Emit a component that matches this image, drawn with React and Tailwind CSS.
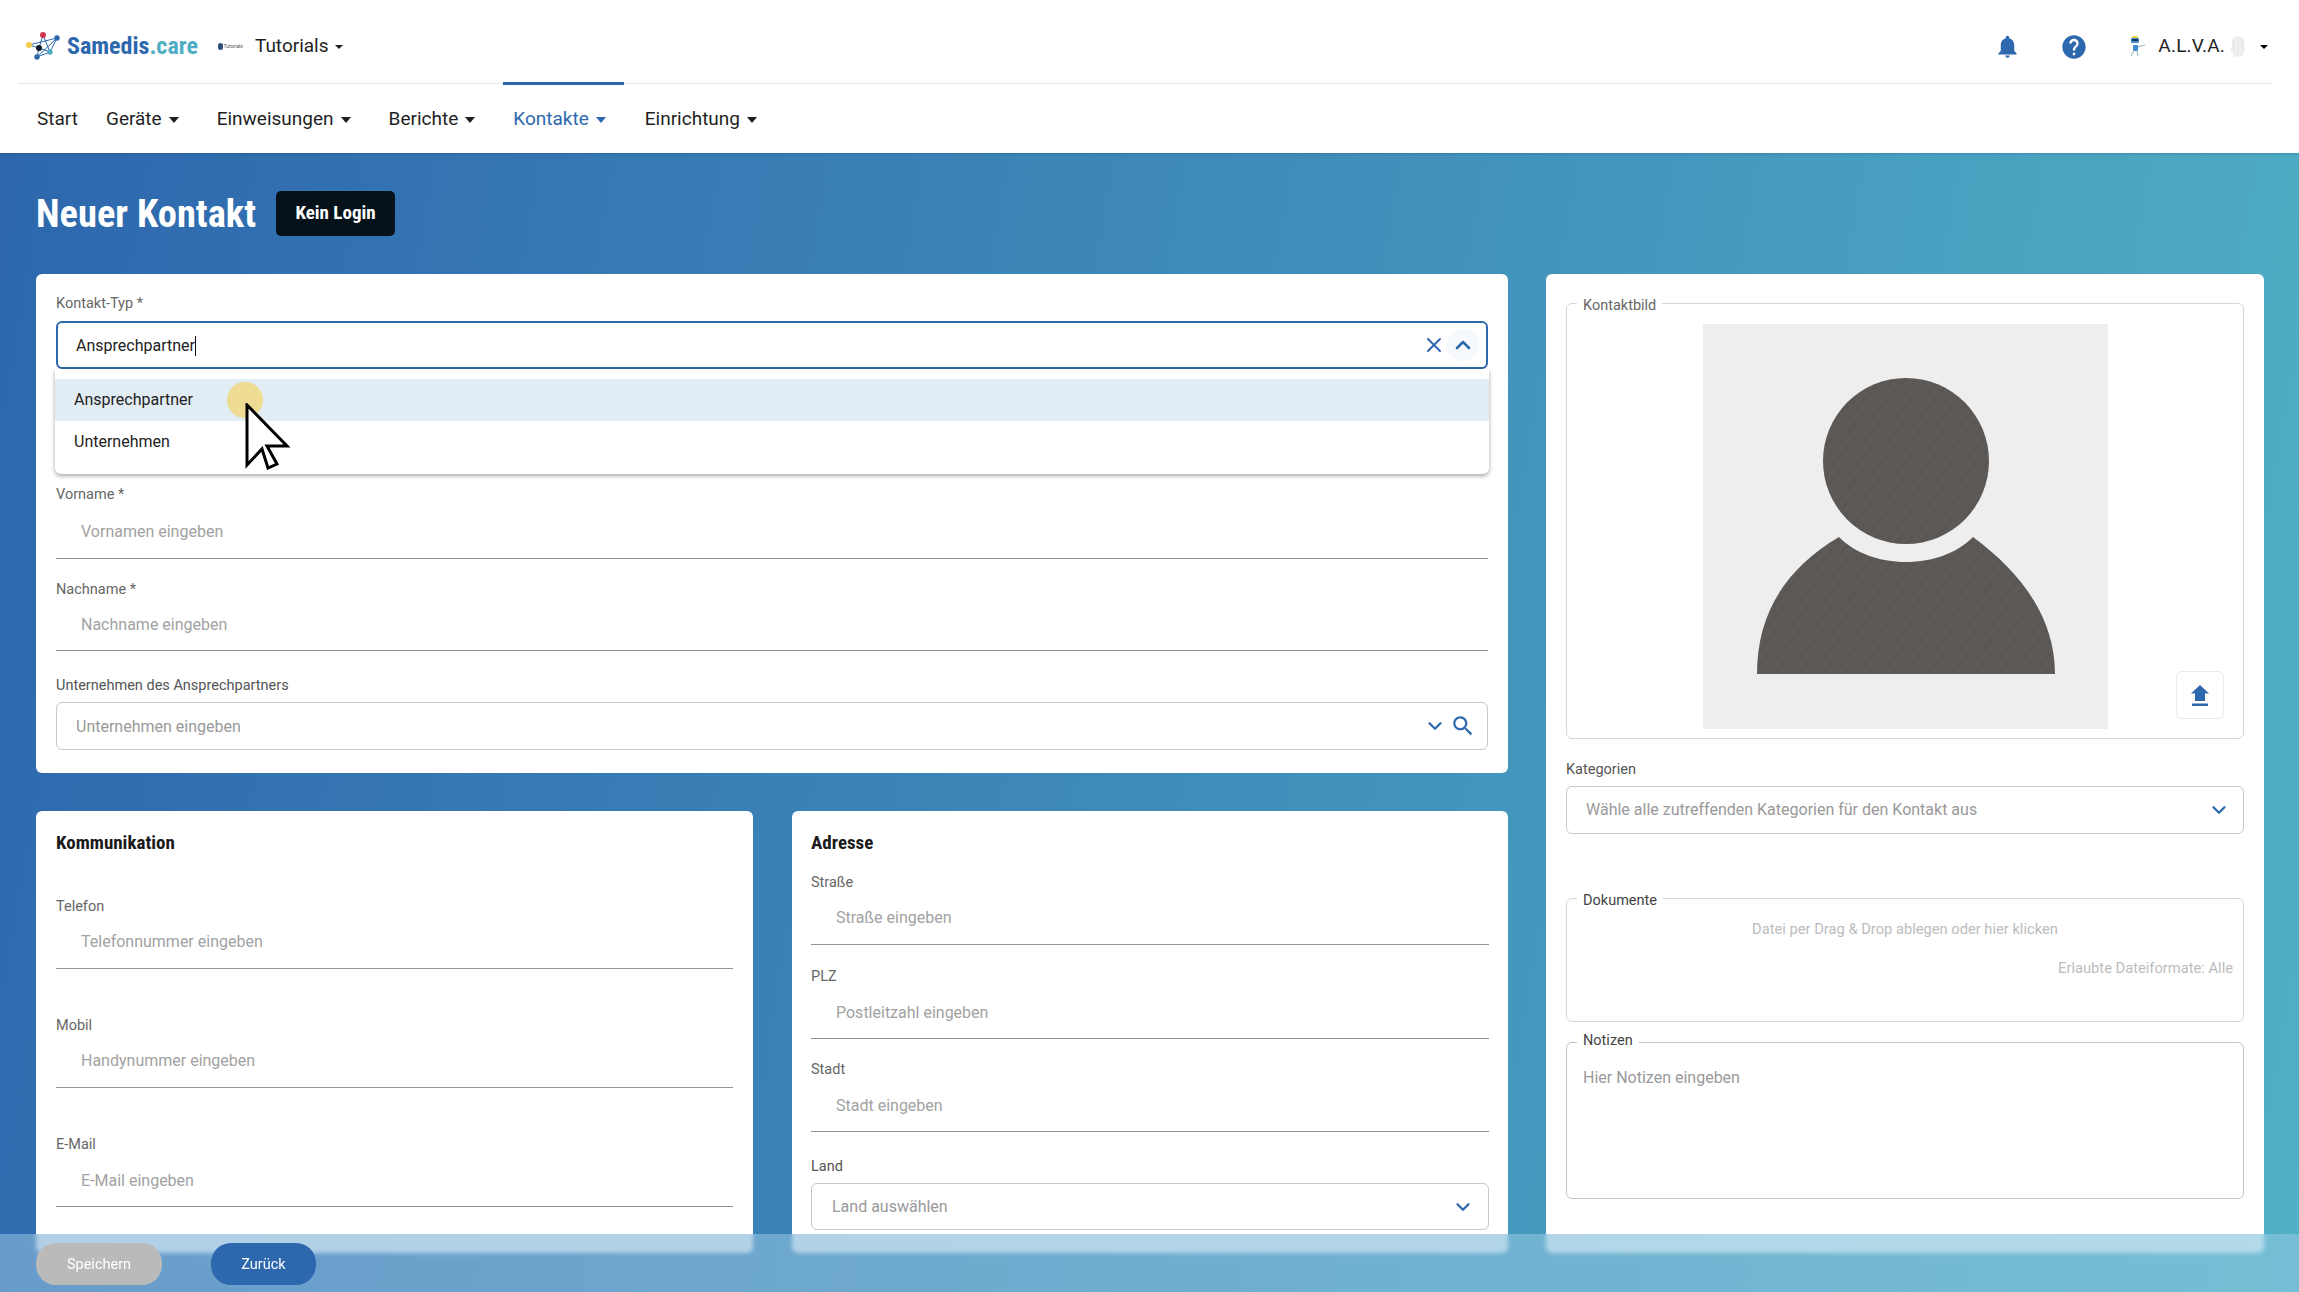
import React from "react";
import { X, ChevronUp, ChevronDown } from "lucide-react";

const font = { fontFamily: "Roboto, sans-serif" };

function Caret({ className = "" }) {
  return (
    <span
      className={`inline-block w-0 h-0 border-x-[5.5px] border-x-transparent border-t-[6px] border-t-current ml-[7px] ${className}`}
    />
  );
}

function NavItem({ label, active, className = "" }) {
  return (
    <div
      className={`flex items-center text-[19px] ${
        active ? "text-[#2d68ae]" : "text-[#1f1f1f]"
      } ${className}`}
    >
      {label}
      <Caret />
    </div>
  );
}

function Label({ children, color = "text-[#666666]", className = "" }) {
  return (
    <div className={`text-[14.5px] leading-[22px] -mb-[2px] ${color} ${className}`}>
      {children}
    </div>
  );
}

// Feld mit Unterstrich
function LineField({ label, placeholder, mt, h = "h-[53px]", pb = "pb-[16px]" }) {
  return (
    <div className={mt}>
      <Label>{label}</Label>
      <div
        className={`${h} ${pb} border-b border-[#949494] flex items-end pl-[25px] text-[16px] leading-5 text-[#a2a2a2]`}
      >
        {placeholder}
      </div>
    </div>
  );
}

function Legend({ children, dark, top = "-top-[8px]" }) {
  return (
    <span
      className={`absolute ${top} left-[10px] bg-white px-[6px] text-[14.5px] leading-5 ${
        dark ? "text-[#444444]" : "text-[#666666]"
      }`}
    >
      {children}
    </span>
  );
}

function Logo() {
  return (
    <svg width="34" height="30" viewBox="0 0 34 30" className="shrink-0">
      <g stroke="#2d68ae" strokeWidth="1" fill="none">
        <path d="M3 14 L31 7 L24 21 L11 26 L13 17 L17 4 L24 21" />
        <path d="M3 14 L13 17 L24 21 M31 7 L11 26" />
      </g>
      <circle cx="17" cy="4" r="3" fill="#d0364f" />
      <circle cx="31" cy="7" r="2.7" fill="#2d68ae" />
      <circle cx="3" cy="14" r="3" fill="#f2cf4a" />
      <circle cx="13" cy="17" r="3" fill="#0c1a2e" />
      <circle cx="24" cy="21" r="2.7" fill="#4fadc3" />
      <circle cx="11" cy="26" r="2.7" fill="#2d68ae" />
    </svg>
  );
}

function SearchIcon() {
  return (
    <svg width="26" height="26" viewBox="0 0 24 24" fill="#2d68ae" className="ml-[4px]">
      <path d="M15.5 14h-.79l-.28-.27C15.41 12.59 16 11.11 16 9.5 16 5.91 13.09 3 9.5 3S3 5.91 3 9.5 5.91 16 9.5 16c1.61 0 3.09-.59 4.23-1.57l.27.28v.79l5 4.99L20.49 19l-4.99-5zm-6 0C7.01 14 5 11.99 5 9.5S7.01 5 9.5 5 14 7.01 14 9.5 11.99 14 9.5 14z" />
    </svg>
  );
}

function Person() {
  return (
    <svg width="405" height="405" viewBox="0 0 405 405" className="block">
      <defs>
        <pattern id="hatch" width="9" height="9" patternUnits="userSpaceOnUse" patternTransform="rotate(-50)">
          <rect width="9" height="9" fill="#5c5957" />
          <rect width="9" height="2" fill="#585553" />
        </pattern>
      </defs>
      <rect width="405" height="405" fill="#eeeeee" />
      <circle cx="203" cy="137" r="83" fill="url(#hatch)" />
      <path
        d="M54 350 C54 290 82 245 136 213 C152 229 176 238 203 238 C230 238 254 229 270 213 C320 250 352 295 352 350 Z"
        fill="url(#hatch)"
      />
    </svg>
  );
}

export default function App() {
  return (
    <div
      className="relative w-[2299px] h-[1292px] overflow-hidden bg-[linear-gradient(100deg,#2d66ad,#50b0c5)]"
      style={font}
    >
      {/* Kopfzeile */}
      <header className="bg-white h-[153px] shadow-sm">
        <div className="h-[84px] ml-[18px] mr-[26px] border-b border-[#e6e6e6] flex items-center pl-[8px] pr-[5px] pt-[10px]">
          <span className="flex items-center mb-[2px]">
            <Logo />
            <span className="ml-[7px] text-[24px] font-bold text-[#2d68ae] [font-stretch:85%]">
              Samedis<span className="text-[#4fadc3]">.care</span>
            </span>
          </span>
          <span className="ml-[20px] w-[25px] flex items-center gap-[1px]">
            <span className="w-[7px] h-[7px] rounded-full bg-[#2d4f7e]" />
            <span className="text-[5px] leading-none text-[#555555]">Tutorials</span>
          </span>
          <span className="ml-[12px] text-[19px] text-[#1f1f1f] flex items-center">
            Tutorials
            <Caret className="!border-x-[4px] !border-t-[4px] !ml-[6px]" />
          </span>
          <div className="ml-auto flex items-center">
            <svg width="27" height="27" viewBox="0 0 24 24" fill="#2d68ae">
              <path d="M12 22c1.1 0 2-.9 2-2h-4c0 1.1.89 2 2 2zm6-6v-5c0-3.07-1.64-5.64-4.5-6.32V4c0-.83-.67-1.5-1.5-1.5s-1.5.67-1.5 1.5v.68C7.63 5.36 6 7.92 6 11v5l-2 2v1h16v-1l-2-2z" />
            </svg>
            <svg width="28" height="28" viewBox="0 0 24 24" fill="#2d68ae" className="ml-[39px]">
              <path d="M12 2C6.48 2 2 6.48 2 12s4.48 10 10 10 10-4.48 10-10S17.52 2 12 2zm1 17h-2v-2h2v2zm2.07-7.75l-.9.92C13.45 12.9 13 13.5 13 15h-2v-.5c0-1.1.45-2.1 1.17-2.83l1.24-1.26c.37-.36.59-.86.59-1.41 0-1.1-.9-2-2-2s-2 .9-2 2H8c0-2.21 1.79-4 4-4s4 1.79 4 4c0 .88-.36 1.68-.93 2.25z" />
            </svg>
            {/* Roboter */}
            <svg width="18" height="22" viewBox="0 0 18 22" className="ml-[40px]">
              <rect x="4" y="0" width="6" height="2" fill="#f2cf4a" />
              <rect x="3" y="2" width="8" height="5" rx="1" fill="#3f8fd0" />
              <rect x="4" y="3" width="6" height="2" fill="#123a55" />
              <rect x="5" y="9" width="5" height="6" rx="1" fill="#3f8fd0" />
              <path d="M10 11 L17 9 M6 15 L3 20 M9 15 L10 20" stroke="#8fb7c4" strokeWidth="1" fill="none" />
            </svg>
            <span className="ml-[12px] text-[19px] tracking-[0.2px] text-[#1f1f1f]">A.L.V.A.</span>
            {/* Kittel */}
            <svg width="14" height="22" viewBox="0 0 14 22" className="ml-[6px]">
              <path d="M5 1 H9 L12 3 L13.5 16 H11 V20 H3 V16 H0.5 L2 3 Z" fill="#f1f1f1" stroke="#e4e4e4" strokeWidth="0.8" />
              <path d="M7 2 V20 M3 4 V15 M11 4 V15" stroke="#dedede" strokeWidth="0.8" fill="none" />
            </svg>
            <Caret className="!border-x-[4px] !border-t-[4px] !ml-[15px]" />
          </div>
        </div>
        <nav className="relative h-[69px] flex items-center pl-[37px] pt-[2px]">
          <span className="text-[19px] text-[#1f1f1f]">Start</span>
          <NavItem label="Geräte" className="ml-[28px]" />
          <NavItem label="Einweisungen" className="ml-[38px]" />
          <NavItem label="Berichte" className="ml-[38px]" />
          <div className="relative ml-[38px]">
            <NavItem label="Kontakte" active />
            <div className="absolute -top-[23px] -left-[10px] -right-[18px] h-[3px] bg-[#2d68ae]" />
          </div>
          <NavItem label="Einrichtung" className="ml-[39px]" />
        </nav>
      </header>

      {/* Titel */}
      <div className="h-[121px] flex items-start pl-[36px] pt-[38px]">
        <h1 className="text-[38.5px] leading-[46px] font-bold text-white [font-stretch:75%]">
          Neuer Kontakt
        </h1>
        <span className="ml-[20px] h-[45px] w-[119px] rounded-[5px] bg-[#06121a] text-white font-bold text-[19px] [font-stretch:75%] flex items-center justify-center">
          Kein Login
        </span>
      </div>

      <div className="flex gap-[38px] pl-[36px] pr-[35px]">
        {/* Linke Spalte */}
        <div className="w-[1472px] flex flex-col gap-[38px]">
          <section className="relative bg-white rounded-[6px] h-[499px] px-[20px] pt-[19px]">
            <Label>Kontakt-Typ *</Label>
            <div className="mt-[8px] h-[48px] rounded-[6px] border-2 border-[#2d68ae] flex items-center pl-[18px] pr-[7px] text-[16px] text-[#222222]">
              <span className="flex items-center mt-[2px]">
                Ansprechpartner
                <span className="w-px h-[20px] bg-[#111111]" />
              </span>
              <X className="ml-auto text-[#2d68ae]" size={24} />
              <span className="ml-[1px] w-[32px] h-[32px] rounded-full bg-[#f5f8fc] flex items-center justify-center">
                <ChevronUp className="text-[#2d68ae]" size={24} strokeWidth={2.5} />
              </span>
            </div>

            <LineField label="Vorname *" placeholder="Vornamen eingeben" mt="mt-[115px]" h="h-[55px]" />
            <LineField label="Nachname *" placeholder="Nachname eingeben" mt="mt-[20px]" h="h-[52px]" pb="pb-[15px]" />

            <Label color="text-[#555555]" className="mt-[24px]">
              Unternehmen des Ansprechpartners
            </Label>
            <div className="mt-[7px] h-[48px] rounded-[6px] border border-[#c8c8c8] flex items-center pl-[19px] pr-[11px] text-[16px] text-[#999999]">
              <span className="mt-[1px]">Unternehmen eingeben</span>
              <ChevronDown className="ml-auto text-[#2d68ae]" size={22} strokeWidth={2.5} />
              <SearchIcon />
            </div>

            {/* Dropdown */}
            <div className="absolute left-[19px] right-[19px] top-[95px] h-[105px] bg-white rounded-b-[6px] shadow-[0_2px_4px_rgba(0,0,0,0.35)] pt-[10px]">
              <div className="h-[42px] bg-[#e2ecf5] flex items-center pl-[19px] text-[16px] text-[#222222]">
                Ansprechpartner
              </div>
              <div className="h-[42px] flex items-center pl-[19px] text-[16px] text-[#222222]">
                Unternehmen
              </div>
            </div>
          </section>

          <div className="flex gap-[39px]">
            <section className="w-[717px] h-[442px] bg-white rounded-[6px] px-[20px] pt-[21px]">
              <h2 className="text-[19px] leading-[22px] font-bold text-[#1a1a1a] [font-stretch:75%]">Kommunikation</h2>
              <LineField label="Telefon" placeholder="Telefonnummer eingeben" mt="mt-[42px]" />
              <LineField label="Mobil" placeholder="Handynummer eingeben" mt="mt-[46px]" />
              <LineField label="E-Mail" placeholder="E-Mail eingeben" mt="mt-[46px]" pb="pb-[15px]" />
            </section>
            <section className="flex-1 h-[442px] bg-white rounded-[6px] px-[19px] pt-[21px]">
              <h2 className="text-[19px] leading-[22px] font-bold text-[#1a1a1a] [font-stretch:75%]">Adresse</h2>
              <LineField label="Straße" placeholder="Straße eingeben" mt="mt-[18px]" />
              <LineField label="PLZ" placeholder="Postleitzahl eingeben" mt="mt-[21px]" pb="pb-[15px]" />
              <LineField label="Stadt" placeholder="Stadt eingeben" mt="mt-[20px]" pb="pb-[15px]" />
              <Label color="text-[#555555]" className="mt-[24px]">Land</Label>
              <div className="mt-[7px] h-[47px] rounded-[6px] border border-[#c8c8c8] flex items-center pl-[20px] pr-[14px] text-[16px] text-[#999999]">
                Land auswählen
                <ChevronDown className="ml-auto text-[#2d68ae]" size={22} strokeWidth={2.5} />
              </div>
            </section>
          </div>
        </div>

        {/* Rechte Spalte */}
        <aside className="flex-1 h-[979px] bg-white rounded-[6px] px-[20px] pt-[29px]">
          <div className="relative h-[436px] rounded-[6px] border border-[#d6d6d6] flex justify-center pt-[20px]">
            <Legend>Kontaktbild</Legend>
            <Person />
            <div className="absolute right-[19px] bottom-[19px] w-[48px] h-[48px] rounded-[6px] border border-[#e6ebf2] flex items-center justify-center">
              <svg width="24" height="24" viewBox="0 0 24 24" fill="#2d68ae">
                <path d="M4 23h16v-2.4H4V23zM7 18h10v-7.6h4L12 2 3 10.4h4V18z" />
              </svg>
            </div>
          </div>

          <Label color="text-[#555555]" className="mt-[20px]">Kategorien</Label>
          <div className="mt-[7px] h-[48px] rounded-[6px] border border-[#c8c8c8] flex items-center pl-[19px] pr-[13px] text-[16px] text-[#999999]">
            Wähle alle zutreffenden Kategorien für den Kontakt aus
            <ChevronDown className="ml-auto text-[#2d68ae]" size={22} strokeWidth={2.5} />
          </div>

          <div className="relative mt-[64px] h-[124px] rounded-[6px] border border-[#d6d6d6]">
            <Legend dark>Dokumente</Legend>
            <div className="pt-[20px] text-center text-[14.7px] leading-5 text-[#bcbcbc]">
              Datei per Drag &amp; Drop ablegen oder hier klicken
            </div>
            <div className="mt-[19px] pr-[10px] text-right text-[14.7px] leading-5 text-[#bcbcbc]">
              Erlaubte Dateiformate: Alle
            </div>
          </div>

          <div className="relative mt-[20px] h-[157px] rounded-[6px] border border-[#c4c4c4] pl-[16px] pt-[25px] text-[16px] leading-5 text-[#999999]">
            <Legend dark top="-top-[12px]">Notizen</Legend>
            Hier Notizen eingeben
          </div>
        </aside>
      </div>

      {/* Mauszeiger */}
      <div className="absolute left-[227px] top-[382px] w-[36px] h-[36px] rounded-full bg-[#eddc92]" />
      <svg width="46" height="68" viewBox="0 0 46 68" className="absolute left-[245px] top-[403px]">
        <path d="M2 2 L2 62 L17 46 L23 65 L32 61 L22 43 L42 43 Z" fill="#ffffff" stroke="#000000" strokeWidth="3" strokeLinejoin="miter" />
      </svg>

      {/* Fußleiste */}
      <div className="absolute left-0 right-0 bottom-0 h-[58px] backdrop-blur-[2px] bg-[linear-gradient(90deg,rgba(136,181,217,0.65),rgba(137,198,221,0.65))] flex items-start pl-[36px] pt-[9px]">
        <span className="w-[126px] h-[42px] pt-[2px] rounded-[20px] bg-[#bababa] text-white text-[14.5px] flex items-center justify-center">
          Speichern
        </span>
        <span className="ml-[49px] w-[105px] h-[42px] pt-[2px] rounded-[20px] bg-[#2d68ae] text-white text-[14.5px] flex items-center justify-center">
          Zurück
        </span>
      </div>
    </div>
  );
}
